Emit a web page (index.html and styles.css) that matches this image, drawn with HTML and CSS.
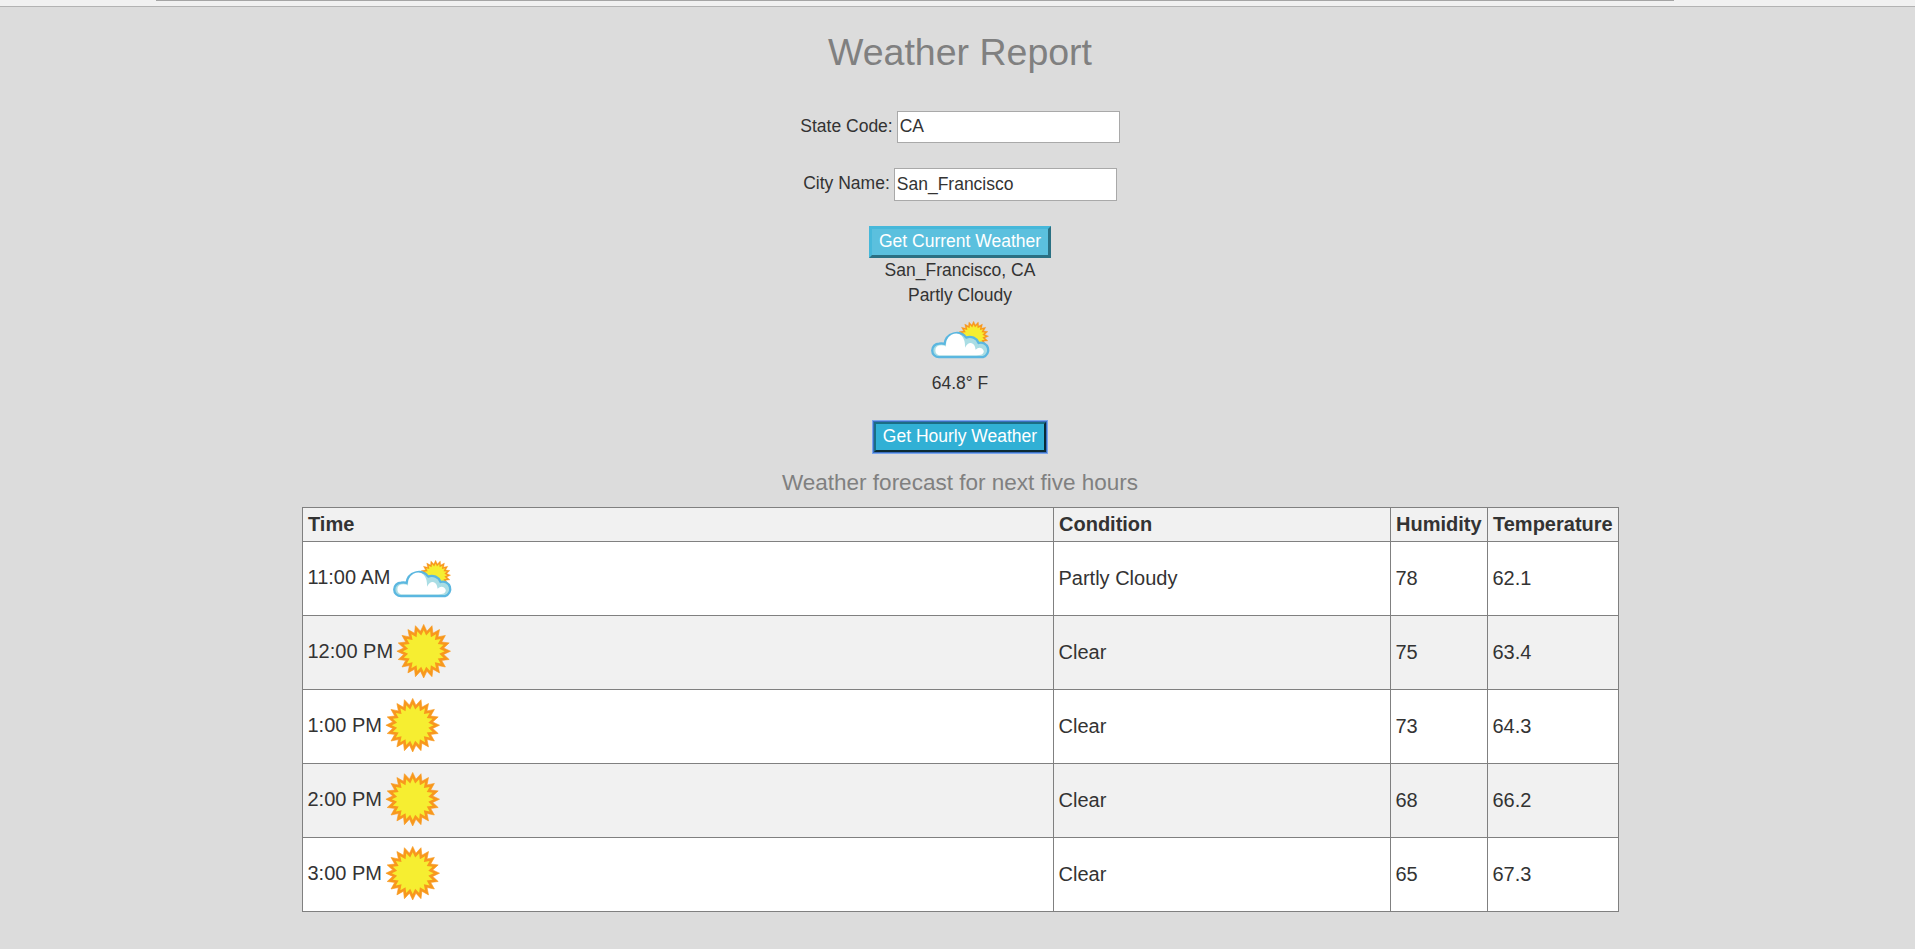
FILE: index.html
```html
<!DOCTYPE html>
<html lang="en">
<head>
<meta charset="utf-8">
<title>Weather Report</title>
<link rel="stylesheet" href="styles.css">
</head>
<body>
<svg class="sprite" aria-hidden="true">
  <defs>
    <polygon id="star" points="26.8,0 20,3.2 25.5,8.3 18,9.2 21.7,15.8 14.3,14.3 15.8,21.7 9.2,18 8.3,25.5 3.2,20 0,26.8 -3.2,20 -8.3,25.5 -9.2,18 -15.8,21.7 -14.3,14.3 -21.7,15.8 -18,9.2 -25.5,8.3 -20,3.2 -26.8,0 -20,-3.2 -25.5,-8.3 -18,-9.2 -21.7,-15.8 -14.3,-14.3 -15.8,-21.7 -9.2,-18 -8.3,-25.5 -3.2,-20 0,-26.8 3.2,-20 8.3,-25.5 9.2,-18 15.8,-21.7 14.3,-14.3 21.7,-15.8 18,-9.2 25.5,-8.3 20,-3.2"/>
    <g id="sun">
      <use href="#star" fill="#f8981d" stroke="#f8981d" stroke-width=".6"/>
      <use href="#star" fill="#f6ee31" transform="scale(.78)"/>
    </g>
    <symbol id="clear" viewBox="0 0 62.5 62.5">
      <use href="#sun" x="30.7" y="30.2"/>
    </symbol>
    <symbol id="partly" viewBox="0 0 62.5 62.5">
      <use href="#sun" transform="translate(44.6 28.2) scale(.56)"/>
      <path d="M10 49.2A6.8 6.8 0 0 1 10 35.6Q13 35 15.6 35.8A12.2 12.2 0 0 1 37.2 29.6A9.4 9.4 0 0 1 49.6 35A7.2 7.2 0 1 1 54 49.2Z" fill="#aadde4" stroke="#5bb7e0" stroke-width="2.3" stroke-linejoin="round"/>
      <path d="M10 47.2A5 5 0 0 1 10 37.6Q14 36.8 17 38.6Q16.6 30.4 22.4 26.8Q28.6 23.8 32.6 27.8Q36.4 31.8 36 39.8Q38.2 34.8 42 35Q46 35.8 46.6 41.8Q49.6 38.6 53 40.4Q56.6 43.4 53 46.4Q50 47.4 46 47.2Z" fill="#fff"/>
    </symbol>
  </defs>
</svg>
<div class="toolbar"><div class="toolbar-edge"></div></div>
<main class="page">
  <h1 class="title">Weather Report</h1>
  <div class="field state"><label for="state">State Code:</label><input id="state" class="input" type="text" value="CA"></div>
  <div class="field city"><label for="city">City Name:</label><input id="city" class="input" type="text" value="San_Francisco"></div>
  <button class="btn current" type="button">Get Current Weather</button>
  <div class="report">
    <div>San_Francisco, CA</div>
    <div>Partly Cloudy</div>
    <svg class="icon"><use href="#partly"/></svg>
    <div>64.8° F</div>
  </div>
  <button class="btn hourly" type="button">Get Hourly Weather</button>
  <h4 class="subtitle">Weather forecast for next five hours</h4>
  <table class="forecast">
    <colgroup><col class="c-time"><col class="c-cond"><col class="c-hum"><col class="c-temp"></colgroup>
    <tr><th>Time</th><th>Condition</th><th>Humidity</th><th>Temperature</th></tr>
    <tr><td>11:00 AM<svg class="icon"><use href="#partly"/></svg></td><td>Partly Cloudy</td><td>78</td><td>62.1</td></tr>
    <tr><td>12:00 PM<svg class="icon"><use href="#clear"/></svg></td><td>Clear</td><td>75</td><td>63.4</td></tr>
    <tr><td>1:00 PM<svg class="icon"><use href="#clear"/></svg></td><td>Clear</td><td>73</td><td>64.3</td></tr>
    <tr><td>2:00 PM<svg class="icon"><use href="#clear"/></svg></td><td>Clear</td><td>68</td><td>66.2</td></tr>
    <tr><td>3:00 PM<svg class="icon"><use href="#clear"/></svg></td><td>Clear</td><td>65</td><td>67.3</td></tr>
  </table>
</main>
</body>
</html>
```
FILE: styles.css
```css
* { box-sizing: border-box; }
html { overflow: hidden; background: #dcdcdc; }
body {
  margin: 0;
  font: 17.5px/25px "Liberation Sans", Arial, sans-serif;
  color: #333;
}
.sprite { display: block; width: 0; height: 0; }
.toolbar {
  height: 7px;
  background: #f1f1f1;
  border-bottom: 1px solid #b3b3b3;
}
.toolbar-edge {
  width: 1518px;
  height: 1px;
  margin-left: 156px;
  background: #a5a5a5;
}
.page {
  display: flex;
  flex-direction: column;
  align-items: center;
  width: 1920px;
}
.title {
  margin: 25px 0 0;
  font-size: 37.5px;
  line-height: 41px;
  font-weight: 400;
  color: #808080;
}
.field { display: flex; align-items: flex-start; gap: 4px; }
.state { margin-top: 38px; }
.city { margin-top: 25px; }
.input {
  width: 223px;
  height: 32px;
  padding: 0 2px 1px;
  border: 1px solid #a9a9a9;
  border-radius: 0;
  background: #fff;
  font: inherit;
  color: #333;
}
.city .input { height: 33px; }
.field label { padding-top: 3px; }
.btn {
  border-radius: 0;
  font: inherit;
  line-height: 25px;
  color: #fff;
  padding: 0 0 2px;
  white-space: nowrap;
}
.current {
  width: 182px;
  height: 32px;
  margin-top: 25px;
  background: #5bc0de;
  border: 3px solid;
  border-color: #46b8da #2a7083 #2a7083 #46b8da;
}
.hourly {
  width: 172px;
  height: 30px;
  margin-top: 26px;
  background: #31b0d5;
  border: 2px solid;
  border-color: #1b6d85 #0b2a34 #0b2a34 #1b6d85;
  box-shadow: 0 0 0 1px #3d6fc0, 0 0 0 2px #79a6ee;
  outline: none;
}
.report {
  display: flex;
  flex-direction: column;
  align-items: center;
}
.icon {
  width: 62.5px;
  height: 62.5px;
  vertical-align: middle;
}
.subtitle {
  margin: 18px 0 0;
  font-size: 22.5px;
  line-height: 25px;
  font-weight: 400;
  color: #808080;
}
.forecast {
  width: 1317px;
  margin-top: 12px;
  border-collapse: collapse;
  table-layout: fixed;
  font-size: 20px;
  line-height: 25px;
}
.c-time { width: 751px; }
.c-cond { width: 337px; }
.c-hum { width: 97px; }
.c-temp { width: 131px; }
.forecast th,
.forecast td {
  height: 74px;
  padding: 0 0 0 5px;
  border: 1px solid #808080;
  text-align: left;
  vertical-align: middle;
}
.forecast th { height: 34px; padding-left: 5.5px; }
.forecast tr { background: #fff; }
.forecast tr:nth-child(odd) { background: #f1f1f1; }
```
